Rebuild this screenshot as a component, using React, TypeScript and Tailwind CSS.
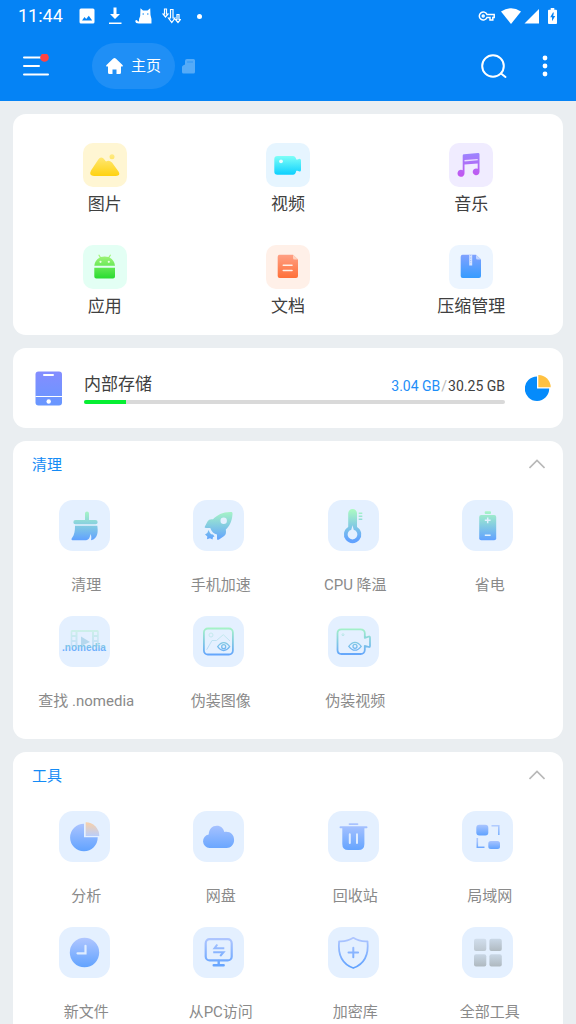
import type { ReactNode } from 'react'

// Vertical gradient in icon coordinates, shared by most of the tile drawings
function Gradient({ id, from, to, y1 = 10, y2 = 40 }: { id: string; from: string; to: string; y1?: number; y2?: number }) {
  return (
    <linearGradient id={id} x1="0" y1={y1} x2="0" y2={y2} gradientUnits="userSpaceOnUse">
      <stop offset="0" stopColor={from} />
      <stop offset="1" stopColor={to} />
    </linearGradient>
  )
}

const categories = [
  {
    name: '图片',
    bg: 'bg-[#fff6d3]',
    icon: (
      <g fill="url(#yellow)">
        <path d="M8 27.500 15.300 16.500Q17.500 13 20.500 15.500L23 18.500Q26 16.500 29 19.500L35.500 28.500Q38 32.500 33 33H11Q5.500 32.500 8 27.500Z" />
        <circle cx="29" cy="13.700" r="2.500" />
      </g>
    ),
  },
  {
    name: '视频',
    bg: 'bg-[#e6f5ff]',
    icon: (
      <>
        <path fill="url(#cyan)" d="M11.500 13H27Q29.500 13 30.300 16.500H31.500L33.500 15.800Q35 15.800 35 17.500V27Q35 28.500 33.500 28.500L31.500 27.800H30.300Q29.500 31.700 27 31.700H11.500Q8.300 31.700 8.300 28.500V16.200Q8.300 13 11.500 13Z" />
        <circle cx="15" cy="18.300" r="1.900" fill="#e9fdff" />
      </>
    ),
  },
  {
    name: '音乐',
    bg: 'bg-[#f0ecff]',
    icon: (
      <>
        <path fill="url(#purple)" d="M13.700 12.500Q13.700 11.300 15 11.200L29 9.900Q30.500 9.800 30.500 11.200V28.800A3.400 3.400 0 1 1 28.700 25.800V20.400L15.500 21.600V30.300A3.500 3.500 0 1 1 13.700 27.300Z" />
        <path stroke="#eadfff" strokeWidth="1.400" d="M15.500 17.700 28.700 16.600" />
      </>
    ),
  },
  {
    name: '应用',
    bg: 'bg-[#e3fff4]',
    icon: (
      <>
        <path fill="url(#green)" d="M11.300 20.700Q11.800 15.500 16.800 12.600L15.200 9.900 16.200 9.500 17.800 12.100Q21.700 10.700 25.500 12.100L27.100 9.500 28.100 9.900 26.500 12.600Q31.500 15.500 32 20.700ZM11.300 22.700H32V31.500Q32 33.400 30 33.400H13.300Q11.300 33.400 11.300 31.500Z" />
        <g fill="#e9ffe4">
          <circle cx="17.500" cy="16.800" r="1.100" />
          <circle cx="25.800" cy="16.800" r="1.100" />
        </g>
      </>
    ),
  },
  {
    name: '文档',
    bg: 'bg-[#fff0e8]',
    icon: (
      <>
        <path fill="url(#orange)" d="M13.700 9.700H27L32 14.500V31Q32 33 30 33H13.700Q11.700 33 11.700 31V11.700Q11.700 9.700 13.700 9.700Z" />
        <path fill="#ffd1bd" d="M27 9.700 32 14.500H28.500Q27 14.500 27 13Z" />
        <path stroke="#fff0e8" strokeWidth="1.600" strokeLinecap="round" d="M17.300 20.300H26M17.300 25.500H26" />
      </>
    ),
  },
  {
    name: '压缩管理',
    bg: 'bg-[#ecf5ff]',
    icon: (
      <>
        <path fill="url(#azure)" d="M13.700 9.700H27L32 14.500V31Q32 33 30 33H13.700Q11.700 33 11.700 31V11.700Q11.700 9.700 13.700 9.700Z" />
        <path fill="#c3d6ff" d="M27 9.700 32 14.500H28.500Q27 14.500 27 13Z" />
        <path stroke="#d5e3ff" strokeWidth="3" d="M21.700 9.700V20.500" />
        <path stroke="#9fbcff" strokeWidth="1" strokeDasharray="1 1.500" d="M21.700 10V18" />
      </>
    ),
  },
]

const cleaning = [
  {
    name: '清理',
    icon: (
      <g fill="url(#mint)">
        <path d="M26 20V13.500a2 2 0 0 1 4 0V20H36.500a2.150 2.150 0 0 1 0 4.300H16.500a2.150 2.150 0 0 1 0-4.300Z" />
        <path d="M16 25.700H38.300C39 31 39.500 38.500 32 40.300 32.500 38 32.500 36 31.500 34 31 37 30 40 27 40.300H13.500C12.500 40.300 12 39 13 38 15.500 34.500 16 31 16 25.700Z" />
      </g>
    ),
  },
  {
    name: '手机加速',
    icon: (
      <g fill="url(#mint)">
        <path
          fillRule="evenodd"
          d="M38 12C40 12 39.600 14 39.300 16 38.800 21 36.500 26.500 32.800 29.500 33.500 34 32.500 35.500 29 37.500L26 39.500Q24 40.800 24 38.500V34.500C21 34 18.500 31.500 17.300 28H13Q11 28 12 26.300L14.500 21.500Q16 18.500 20 19.300C24 15 30 11.800 38 12ZM30.700 17.500a3.200 3.200 0 1 0 0 6.400 3.200 3.200 0 0 0 0-6.400Z"
        />
        <path d="M15.500 30 17 33Q18 34.500 20 34.500L21.500 36.500 20 37 19.500 39.500 17 38.300 14 39.300 14.300 36.500 12 34.500 14.300 33Z" />
      </g>
    ),
  },
  {
    name: 'CPU 降温',
    icon: (
      <g fill="url(#mint)">
        <path
          fillRule="evenodd"
          d="M20.200 13.300a4.400 4.400 0 0 1 8.800 0V27a8.700 8.700 0 1 1-8.800 0ZM24.500 25.300 23.300 29.800a4.900 4.900 0 1 0 2.400 0Z"
        />
        <path d="M30.700 12.400H34.300V13.900H30.700ZM30.700 15.400H34.300V16.900H30.700ZM30.700 18.400H34.300V19.900H30.700Z" />
      </g>
    ),
  },
  {
    name: '省电',
    icon: (
      <>
        <g fill="url(#mint)">
          <rect x="22.700" y="11.300" width="6.300" height="2.700" rx="1" />
          <rect x="17.200" y="15" width="17" height="25.200" rx="2" />
        </g>
        <path stroke="#e3f1ff" strokeWidth="1.500" d="M25.700 17.400V23.200M22.800 20.300H28.600M22.800 35.200H28.600" />
      </>
    ),
  },
  {
    name: '查找 .nomedia',
    icon: (
      <>
        <path
          fill="url(#mintFaint)"
          fillRule="evenodd"
          d="M13 14H38.500Q39.700 14 39.700 15.500V30H11.700V15.500Q11.700 14 13 14ZM18.500 16V30H33V16ZM13.300 16V19H16.500V16ZM13.300 21V24H16.500V21ZM13.300 26V29H16.500V26ZM35 16V19H38.200V16ZM35 21V24H38.200V21ZM35 26V29H38.200V26Z"
        />
        <path fill="#b5d8ee" d="M22 20.500 31 26 22 30Z" />
        <text x="3" y="35" fontSize="10" fontWeight="700" fontFamily="Liberation Sans, sans-serif" fill="url(#word)">
          .nomedia
        </text>
      </>
    ),
  },
  {
    name: '伪装图像',
    icon: (
      <g fill="none" stroke="url(#mint)">
        <rect x="10.900" y="12.500" width="29" height="26" rx="4" strokeWidth="1.800" />
        <g strokeWidth="1" opacity=".4">
          <circle cx="18" cy="19" r="2" />
          <path d="M13.700 33.700 19 24.500H23.500L30.300 18.700 37 25" />
        </g>
        <path strokeWidth="1.300" d="M24.700 30.700Q27.500 26.700 30.700 26.700T36.700 30.700Q34 34.500 30.700 34.500T24.700 30.700Z" />
        <circle cx="30.700" cy="30.700" r="2" strokeWidth="1.300" />
      </g>
    ),
  },
  {
    name: '伪装视频',
    icon: (
      <g fill="none" stroke="url(#mint)">
        <path strokeWidth="1.800" strokeLinejoin="round" d="M13.500 13.300H32.500Q36.500 13.300 36.800 17V21.800L41 20.500Q42 20.500 42 21.500V30Q42 31 41 31L36.800 29.800V34Q36.500 38 32.500 38H13.500Q9.500 38 9.500 34V17.300Q9.500 13.300 13.500 13.300Z" />
        <circle cx="15" cy="18.700" r="1" opacity=".5" />
        <path strokeWidth="1.300" d="M20.800 30.300Q23.700 26.300 27 26.300T33.200 30.300Q30.300 34.200 27 34.200T20.800 30.300Z" />
        <circle cx="27" cy="30.300" r="2" strokeWidth="1.300" />
      </g>
    ),
  },
]

const tools = [
  {
    name: '分析',
    icon: (
      <>
        <path fill="url(#blue)" d="M25 12.700V26.300H38.700A13.800 13.800 0 1 1 25 12.700Z" />
        <path fill="url(#peach)" d="M26.700 11.200A13.800 13.800 0 0 1 40.300 25H26.700Z" />
      </>
    ),
  },
  {
    name: '网盘',
    icon: (
      <path fill="url(#blue)" d="M16.500 37A6.800 6.800 0 0 1 15.700 23.500C16 18 19.300 14.700 23.800 14.700 28 14.700 30.500 17.200 31.300 21 37 20 41.100 23.500 41.100 29 41.100 33.700 37.700 37 33.700 37Z" />
    ),
  },
  {
    name: '回收站',
    icon: (
      <>
        <path fill="url(#blue)" d="M21.500 12.200H29.500a.9.900 0 0 1 0 1.800H21.500a.9.900 0 0 1 0-1.800ZM12.500 15.300H38.500a1 1 0 0 1 0 2H36.400V33Q36.400 39 30.500 39H20.200Q14.300 39 14.300 33V17.300H12.500a1 1 0 0 1 0-2Z" />
        <path stroke="#e0edff" strokeWidth="2" strokeLinecap="round" d="M21.800 23.300V32M29 23.300V32" />
      </>
    ),
  },
  {
    name: '局域网',
    icon: (
      <>
        <rect x="14.300" y="13.800" width="12" height="10.600" rx="3" fill="url(#blueTop)" />
        <rect x="26.300" y="30" width="11.700" height="8" rx="2.500" fill="url(#blueLow)" />
        <path fill="none" stroke="url(#blueTop)" strokeWidth="1.600" opacity=".8" d="M29.500 14.800H36.800V24" />
        <path fill="none" stroke="url(#blueLow)" strokeWidth="1.600" d="M15.300 27V36.200H22.500" />
      </>
    ),
  },
  {
    name: '新文件',
    icon: (
      <>
        <circle cx="25.500" cy="25.500" r="14.700" fill="url(#blue)" />
        <path fill="none" stroke="#dfedff" strokeWidth="2.200" strokeLinecap="round" d="M26.500 18.800V26.300H18.500" />
      </>
    ),
  },
  {
    name: '从PC访问',
    icon: (
      <>
        <rect x="12.700" y="12.200" width="26" height="21.200" rx="4" fill="none" stroke="url(#blue)" strokeWidth="2.200" />
        <path fill="none" stroke="url(#blue)" strokeWidth="2.400" strokeLinecap="round" d="M25.700 34V38M20.700 38.200H30.700" />
        <path fill="none" stroke="url(#blue)" strokeWidth="2" d="M24.300 17.500 21.500 21.200H31.300M20.200 25.300H30.500L27.200 29" />
      </>
    ),
  },
  {
    name: '加密库',
    icon: (
      <g fill="none" stroke="url(#blue)" strokeLinecap="round" strokeLinejoin="round">
        <path strokeWidth="1.800" d="M25.300 10.800Q31.500 14.800 39.500 14.300C40.800 27 37.500 36.500 25.300 41 13 36.500 9.800 27 11.100 14.300Q19 14.800 25.300 10.800Z" />
        <path strokeWidth="2" d="M25.300 20.700V30.300M20.500 25.500H30.100" />
      </g>
    ),
  },
  {
    name: '全部工具',
    icon: (
      <>
        <rect x="12" y="11.800" width="12.300" height="12.200" rx="2" fill="url(#grayTop)" opacity=".75" />
        <rect x="27.400" y="11.800" width="12.400" height="12.200" rx="2" fill="url(#grayTop)" />
        <rect x="12" y="27.200" width="12.300" height="12.200" rx="2" fill="url(#grayLow)" />
        <rect x="27.400" y="27.200" width="12.400" height="12.200" rx="2" fill="url(#grayLow)" />
      </>
    ),
  },
]

function StatusBar() {
  return (
    <div className="flex h-8 items-center justify-between px-[18px]">
      <div className="flex items-center">
        <span className="text-[18px] leading-8">11:44</span>
        <svg className="ml-4 h-4 w-4" viewBox="0 0 16 16" fill="#fff" fillRule="evenodd">
          <path d="M2 .5H14Q15.500.5 15.500 2V14Q15.500 15.500 14 15.500H2Q.5 15.500.5 14V2Q.5.5 2 .5ZM3 12.500H13.200L9.800 7.800 7.200 11 5.500 9Z" />
        </svg>
        <svg className="ml-3 h-[18px] w-4" viewBox="0 0 16 18" fill="#fff">
          <path d="M6.500.5H9.500V7H13L8 12 3 7H6.500ZM2 15.500H14.500V17H2Z" />
        </svg>
        <svg className="ml-3 h-4 w-[17px]" viewBox="0 0 17 16">
          <path fill="#fff" d="M5.500.3 8 2.500H12.500L15.200.3 15.500 7Q17 11 16.500 15.500H4Q.3 15.500.3 13 1 11.500 2.300 12.500 2.500 13.600 4 13.500 3.800 10.500 5.200 8Z" />
          <path fill="#0583f5" d="M7.500 5.500H9V6.500H7.500ZM12 5.500H13.500V6.500H12Z" />
        </svg>
        <svg className="ml-[10px] h-4 w-[19px]" viewBox="0 0 19 16" fill="none" stroke="#fff" strokeWidth="1.200">
          <path d="M2.500 1H4.500V6H6L3.500 9 1 6H2.500ZM8.500 1.500H11V10H13L9.800 14.500 6.500 10H8.500ZM15 6.500H17V11.500H18.500L16 14.500 13.500 11.500H15Z" />
        </svg>
        <span className="ml-4 h-[5px] w-[5px] rounded-full bg-white" />
      </div>
      <div className="flex items-center">
        <svg className="h-3 w-[17px]" viewBox="0 0 17 12" fill="none" stroke="#fff" strokeWidth="1.500">
          <path d="M9 4.500H16.200V7.500H14.800V10H12V7.500H9A4 4 0 1 1 9 4.500Z" />
          <circle cx="5.200" cy="6" r="1" />
        </svg>
        <svg className="ml-[6px] h-4 w-5" viewBox="0 0 20 16" fill="#fff">
          <path d="M0 3.500Q10-3 20 3.500L10 16Z" />
        </svg>
        <svg className="ml-[3px] h-4 w-4" viewBox="0 0 16 16" fill="#fff">
          <path d="M15 1V15.500H.5Z" />
        </svg>
        <svg className="ml-2 mr-px h-4 w-[9px]" viewBox="0 0 10 18" preserveAspectRatio="none">
          <path fill="#fff" d="M3 0H7V2H9Q10 2 10 3V17Q10 18 9 18H1Q0 18 0 17V3Q0 2 1 2H3Z" />
          <path fill="#0583f5" d="M5.500 5 2.500 10.500H4.500V15L8 9H5.800L6.500 5Z" />
        </svg>
      </div>
    </div>
  )
}

function Toolbar() {
  return (
    <div className="flex h-[69px] items-center pb-px pl-[23px] pr-5">
      <button aria-label="菜单">
        <svg className="h-6 w-[27px]" viewBox="0 0 27 24">
          <path stroke="#fff" strokeWidth="2" strokeLinecap="round" d="M1 3.500H18M1 12H16M1 20.500H25" />
          <circle cx="21.500" cy="3.500" r="4.300" fill="#ff4343" />
        </svg>
      </button>
      <button className="ml-[42px] flex h-[46px] w-[83px] items-center justify-center gap-2 rounded-full bg-[#1f8ff6]">
        <svg className="h-[18px] w-[17px]" viewBox="0 0 17 18" fill="#fff">
          <path d="M8.500 1Q9.200 1 10 1.700L16.500 8Q17.500 9.500 15.700 9.500H15V15.500Q15 17 13.500 17H10.500V12.500H6.500V17H3.500Q2 17 2 15.500V9.500H1.300Q-.5 9.500.5 8L7 1.700Q7.800 1 8.500 1Z" />
        </svg>
        <span className="text-[15px] leading-6">主页</span>
      </button>
      <button className="ml-[7px]" aria-label="存储卡">
        <svg className="h-[15px] w-[13px]" viewBox="0 0 13 15">
          <path fill="#55abf8" d="M5 0H11.500Q13 0 13 1.500V13Q13 14.500 11.500 14.500H1.500Q0 14.500 0 13V8Q0 7 1 6.500L3 5.500V2Q3 0 5 0Z" />
          <path stroke="#2f97f7" d="M5 3H11" />
        </svg>
      </button>
      <button className="ml-auto" aria-label="搜索">
        <svg className="h-7 w-7" viewBox="0 0 28 28" fill="none" stroke="#fff" strokeWidth="2" strokeLinecap="round">
          <circle cx="13" cy="14" r="10.800" />
          <path d="M21 21.500 25.500 25" />
        </svg>
      </button>
      <button className="ml-7" aria-label="更多">
        <svg className="h-6 w-5" viewBox="0 0 20 24" fill="#fff">
          <circle cx="9" cy="4" r="2.400" />
          <circle cx="9" cy="12" r="2.400" />
          <circle cx="9" cy="20" r="2.400" />
        </svg>
      </button>
    </div>
  )
}

function StorageCard() {
  const used = 3.04
  const total = 30.25

  return (
    <section className="flex h-20 items-center rounded-[13px] bg-white pl-[22px] pr-3">
      <svg className="h-[35px] w-[27px]" viewBox="0 0 27 35">
        <rect x=".5" y=".5" width="26.500" height="34" rx="3" fill="url(#phone)" />
        <path stroke="#fff" strokeWidth="2" strokeLinecap="round" d="M9 4H18" />
        <path stroke="#fff" d="M.5 25.500H27" />
        <circle cx="13.700" cy="30.500" r="2.200" fill="#fff" />
      </svg>
      <div className="ml-[22px] flex-1 pb-[2px]">
        <div className="flex items-end justify-between">
          <h2 className="text-[17px] leading-7">内部存储</h2>
          <p className="text-[14px] leading-6">
            <span className="text-[#1e8ef8]">3.04 GB</span>
            <span className="px-px text-[#b8b8b8]">/</span>
            <span>30.25 GB</span>
          </p>
        </div>
        <div
          className="mt-[2px] h-1 overflow-hidden rounded-full bg-[#d9d9d9]"
          role="progressbar"
          aria-label="内部存储"
          aria-valuenow={used}
          aria-valuemax={total}
        >
          <div className="h-full bg-[#06ef32]" style={{ width: `${(used / total) * 100}%` }} />
        </div>
      </div>
      <button className="ml-5" aria-label="存储分析">
        <svg className="h-[26px] w-[26px]" viewBox="0 0 26 26">
          <path fill="#058bfb" d="M12 1.500V13.500H24.200A12.200 12.200 0 1 1 12 1.500Z" />
          <path fill="#ffc141" d="M13.300 0A12.300 12.300 0 0 1 25.700 12.300H13.300Z" />
        </svg>
      </button>
    </section>
  )
}

function ToolSection({ title, items }: { title: string; items: { name: string; icon: ReactNode }[] }) {
  return (
    <section className="rounded-[13px] bg-white px-[6px] pb-[26px]">
      <div className="flex h-12 items-center justify-between pl-[13px] pr-3">
        <h2 className="text-[15px] leading-6 text-[#148bf5]">{title}</h2>
        <button className="pb-[2px]" aria-label={`收起${title}`}>
          <svg className="h-[10px] w-4" viewBox="0 0 16 10" fill="none" stroke="#b8b8b8" strokeWidth="1.600">
            <path d="M.5 9 8 1.500 15.500 9" />
          </svg>
        </button>
      </div>
      <div className="grid grid-cols-4 gap-y-[19px] pt-[11px]">
        {items.map((item) => (
          <button key={item.name} className="flex flex-col items-center">
            <span className="mr-1 rounded-[14px] bg-[#e4f0ff]">
              <svg className="h-[51px] w-[51px]" viewBox="0 0 51 51">
                {item.icon}
              </svg>
            </span>
            <span className="mt-[22px] text-[15px] leading-6 text-[#8a8a8a]">{item.name}</span>
          </button>
        ))}
      </div>
    </section>
  )
}

export default function App() {
  return (
    <div className="flex h-screen flex-col bg-[#eaeef1] font-[Roboto,'Noto_Sans_CJK_SC',sans-serif] text-[#404040]">
      {/* Shared gradients */}
      <svg className="absolute h-0 w-0" aria-hidden="true">
        <defs>
          <Gradient id="yellow" from="#ffea80" to="#ffd20f" y1={12} y2={33} />
          <Gradient id="cyan" from="#7efff7" to="#0bcfff" y1={13} y2={32} />
          <Gradient id="purple" from="#9b86ff" to="#c354ef" y2={34} />
          <Gradient id="green" from="#a5f57b" to="#2bdc32" y2={33} />
          <Gradient id="orange" from="#ff9f83" to="#ff7038" y2={33} />
          <Gradient id="azure" from="#80a2ff" to="#369cff" y2={33} />
          <Gradient id="mint" from="#aaf9c2" to="#61a2ff" />
          <Gradient id="mintFaint" from="#cff5e4" to="#c3defa" y2={30} />
          <Gradient id="word" from="#8ad2dc" to="#6aabff" y1={27} y2={35} />
          <Gradient id="blue" from="#b2c7ff" to="#62a3ff" />
          <Gradient id="blueTop" from="#a8c4ff" to="#62a3ff" y1={14} y2={24} />
          <Gradient id="blueLow" from="#a8c4ff" to="#62a3ff" y1={30} y2={38} />
          <Gradient id="peach" from="#ffd0a0" to="#b6ceff" y2={26} />
          <Gradient id="grayTop" from="#c9d7e6" to="#b0bac1" y1={12} y2={24} />
          <Gradient id="grayLow" from="#c9d7e6" to="#b0bac1" y1={27} y2={39} />
          <Gradient id="phone" from="#858dff" to="#6797ff" y1={0} y2={35} />
        </defs>
      </svg>

      <header className="shrink-0 bg-[#0583f5] text-white">
        <StatusBar />
        <Toolbar />
      </header>

      <main className="flex flex-1 flex-col gap-[13px] overflow-y-auto p-[13px] [scrollbar-width:none] *:shrink-0">
        {/* Categories */}
        <section className="grid grid-cols-3 gap-y-6 rounded-[13px] bg-white pt-[29px] pb-3">
          {categories.map((category) => (
            <button key={category.name} className="flex flex-col items-center">
              <span className={`rounded-[10px] ${category.bg}`}>
                <svg className="h-11 w-11" viewBox="0 0 44 44" fill="none">
                  {category.icon}
                </svg>
              </span>
              <span className="text-[17px] leading-[34px]">{category.name}</span>
            </button>
          ))}
        </section>

        <StorageCard />
        <ToolSection title="清理" items={cleaning} />
        <ToolSection title="工具" items={tools} />
      </main>
    </div>
  )
}
